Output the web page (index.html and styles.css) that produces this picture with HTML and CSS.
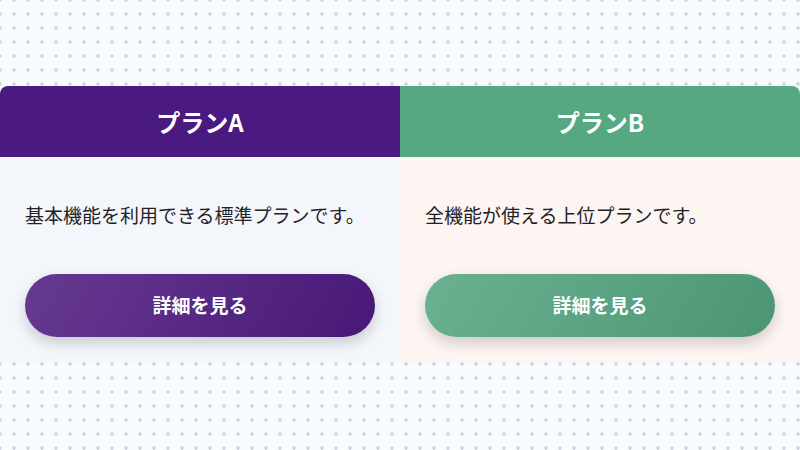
FILE: index.html
```html
<!DOCTYPE html>
<html lang="ja">
  <head>
    <meta charset="UTF-8" />
    <meta name="viewport" content="width=device-width, initial-scale=1.0" />
    <title>プラン比較</title>
    <link rel="stylesheet" href="styles.css">
  </head>
  <body>
    <div class="plans">
      <div class="plan plan-a">
        <div class="plan-head">プランA</div>
        <div class="plan-body">
          <p>基本機能を利用できる標準プランです。</p>
          <a class="btn" href="#">詳細を見る</a>
        </div>
      </div>
      <div class="plan plan-b">
        <div class="plan-head">プランB</div>
        <div class="plan-body">
          <p>全機能が使える上位プランです。</p>
          <a class="btn" href="#">詳細を見る</a>
        </div>
      </div>
    </div>
  </body>
</html>
```

FILE: styles.css
```css
/* plan cards on a dotted background */
body {
  margin: 0;
  min-height: 100vh;
  display: flex;
  align-items: center;
  font-family: "Noto Sans CJK JP", "Noto Sans", sans-serif;
  color: #1f2328;
  background-color: #f8fafc;
  background-image: radial-gradient(circle, #cbd5e1 1.5px, transparent 1.8px);
  background-size: 14px 14px;
  background-position: -7px -7px;
}
.plans {
  display: flex;
  width: 100%;
  margin-top: -2px;
}
.plan {
  flex: 1;
  display: flex;
  flex-direction: column;
}
.plan-a {
  border-top-left-radius: 8px;
  overflow: hidden;
}
.plan-b {
  border-top-right-radius: 8px;
  overflow: hidden;
}
.plan-head {
  height: 71px;
  display: flex;
  align-items: center;
  justify-content: center;
  color: #fff;
  font-size: 24px;
  font-weight: 700;
}
.plan-a .plan-head {
  background-color: #4b1a80;
}
.plan-b .plan-head {
  background-color: #56a883;
}
.plan-body {
  padding: 25px;
}
.plan-a .plan-body {
  background-color: #f3f6fb;
}
.plan-b .plan-body {
  background-color: #fdf5f2;
}
.plan-body p {
  margin: 20px 0 0;
  font-size: 19px;
  line-height: 26px;
}
.btn {
  display: block;
  margin-top: 46px;
  height: 63px;
  line-height: 61px;
  border-radius: 32px;
  text-align: center;
  color: #fff;
  font-size: 19px;
  font-weight: 700;
  text-decoration: none;
  box-shadow: 0 6px 14px rgba(0, 0, 0, 0.18);
}
.plan-a .btn {
  background: linear-gradient(120deg, #673a91, #471877);
}
.plan-b .btn {
  background: linear-gradient(120deg, #6ab192, #4b9574);
}
```
